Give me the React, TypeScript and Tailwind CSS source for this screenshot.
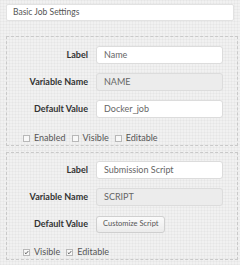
import React from "react";

type Field = { label: string; value?: string; disabled?: boolean; button?: string };

function Row({ f }: { f: Field }) {
  return (
    <div className="flex h-[18px] items-center">
      <div className="w-[81px] text-right text-[9px] font-bold text-[#333]">{f.label}</div>
      {f.button ? (
        <button className="ml-[8px] h-[17px] rounded-[3px] border border-[#cfcfcf] bg-gradient-to-b from-[#fbfbfb] to-[#ebebeb] px-[6px] text-[7.5px] text-[#555]">
          {f.button}
        </button>
      ) : (
        <div
          className={
            "ml-[8px] flex h-[18px] w-[127px] items-center rounded-[3px] border border-[#dcdcdc] px-[7px] text-[9px] " +
            (f.disabled ? "bg-[#ececec] text-[#666]" : "bg-white text-[#666]")
          }
        >
          {f.value}
        </div>
      )}
    </div>
  );
}

function Check({ label, checked }: { label: string; checked?: boolean }) {
  return (
    <div className="flex items-center">
      <span className="flex h-[7px] w-[7px] items-center justify-center border border-[#b8b8b8] bg-[#f8f8f8]">
        {checked && (
          <svg viewBox="0 0 8 8" className="h-[7px] w-[7px]">
            <path d="M1.3 4.2 L3.2 6 L6.8 1.8" fill="none" stroke="#444" strokeWidth="1.4" />
          </svg>
        )}
      </span>
      <span className="ml-[4px] text-[9px] text-[#555]">{label}</span>
    </div>
  );
}

function Panel({
  fields,
  checks,
  first,
}: {
  fields: Field[];
  checks: { label: string; checked?: boolean }[];
  first?: boolean;
}) {
  return (
    <div className={"border border-dashed border-[#c9c9c9] pb-[1px] " + (first ? "pt-[9px]" : "pt-[8px]")}>
      <div className="flex flex-col gap-[9px]">
        {fields.map((f) => (
          <Row key={f.label} f={f} />
        ))}
      </div>
      <div className={"flex h-[12px] items-center gap-[6px] pl-[16px] " + (first ? "mt-[14px]" : "mt-[13px]")}>
        {checks.map((c) => (
          <Check key={c.label} label={c.label} checked={c.checked} />
        ))}
      </div>
    </div>
  );
}

export default function App() {
  return (
    <div
      className="h-[265px] w-[240px] overflow-hidden bg-[#f1f1f1] bg-[image:linear-gradient(to_right,rgba(0,0,0,0.025)_1px,transparent_1px),linear-gradient(to_bottom,rgba(0,0,0,0.025)_1px,transparent_1px)] bg-[size:3px_3px] px-[6px] pt-[4px]"
      style={{ fontFamily: "Lato, 'Liberation Sans', sans-serif" }}
    >
      <div className="flex h-[17px] items-center rounded-[2px] border border-[#e2e2e2] bg-white pl-[6px] text-[8.5px] text-[#555]">
        Basic Job Settings
      </div>
      <div className="mt-[15px] mr-[-4px] flex flex-col gap-[6px]">
        <Panel
          first
          fields={[
            { label: "Label", value: "Name" },
            { label: "Variable Name", value: "NAME", disabled: true },
            { label: "Default Value", value: "Docker_job" },
          ]}
          checks={[{ label: "Enabled" }, { label: "Visible" }, { label: "Editable" }]}
        />
        <Panel
          fields={[
            { label: "Label", value: "Submission Script" },
            { label: "Variable Name", value: "SCRIPT", disabled: true },
            { label: "Default Value", button: "Customize Script" },
          ]}
          checks={[
            { label: "Visible", checked: true },
            { label: "Editable", checked: true },
          ]}
        />
      </div>
    </div>
  );
}
